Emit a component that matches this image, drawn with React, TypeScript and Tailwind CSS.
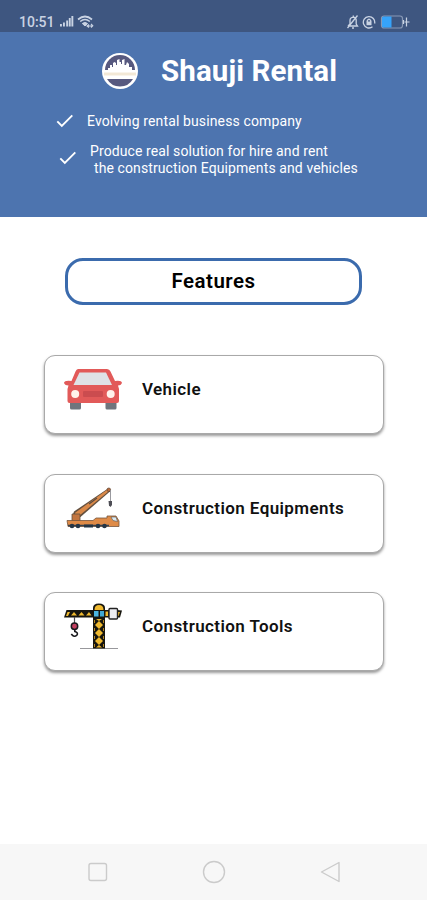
import type { ReactNode } from "react";

interface Feature {
  title: string;
  icon: ReactNode;
}

function CheckIcon() {
  return (
    <svg width="18" height="14" viewBox="0 0 18 14" fill="none" stroke="#fff" strokeWidth="1.9">
      <path d="M1.3 7.3 L5.8 11.8 L16.3 1.3" />
    </svg>
  );
}

function CarIcon() {
  return (
    <svg width="60" height="50" viewBox="0 0 60 50">
      <rect x="7" y="34" width="11" height="10.5" rx="1.5" fill="#6f757d" />
      <rect x="42.5" y="34" width="11" height="10.5" rx="1.5" fill="#6f757d" />
      <path
        d="M15 4 H44 Q46.5 4 47.5 6.5 L52 16 Q58.5 15 59 18 Q58 20.500 55 20.500 L56 24 V36 Q56 38 54 38 H6.500 Q4.500 38 4.500 36 V24 L5.500 20.500 Q2 20.500 1 18 Q1.500 15 8.500 16 L12.500 6.500 Q13.500 4 15 4 Z"
        fill="#e25a59"
      />
      <path d="M16.5 7.5 H43 L49 20 H10.5 Z" fill="#dfe2e6" />
      <rect x="20" y="26" width="20" height="6" rx="1" fill="#cb4c4f" />
      <circle cx="12.2" cy="29" r="4" fill="#fff3ec" />
      <circle cx="47.7" cy="29" r="4" fill="#fff3ec" />
    </svg>
  );
}

function TruckCraneIcon() {
  return (
    <svg width="60" height="50" viewBox="0 0 60 50">
      {/* boom */}
      <path d="M9 33 L11 27.5 L45 4.500 L47.500 7 L17.500 33 Z" fill="#63503f" />
      <path d="M11 32 L12.5 28.5 L44.500 5.500 L46 7 L16.500 31.500 Z" fill="#d98848" />
      <path d="M26 20 L34 14" stroke="#5a4a40" strokeWidth="1.2" />
      <circle cx="45.8" cy="5.8" r="1.8" fill="#b96a3a" stroke="#5b4334" strokeWidth=".7" />
      <path d="M47.5 6 V17" stroke="#8e8e94" strokeWidth=".9" />
      <path d="M45.5 17 H49 V21 L47.5 23 L46 21.5 Z" fill="#4d4d55" />
      {/* chassis and cab */}
      <path d="M9 30 H17 V37 H9 Z" fill="#c27540" stroke="#63503f" strokeWidth=".8" />
      <path d="M4 36.500 H30 L33 34 H44 V32 H53 L56 37 V42.500 H5 Z" fill="#df8b47" stroke="#76563e" strokeWidth=".8" />
      <path d="M48 33 H53 L54.5 37.5 L50 36.500 Z" fill="#dbe9f1" stroke="#555" strokeWidth=".6" />
      <path d="M5 41.500 H46" stroke="#38424d" strokeWidth="1.500" />
      <g fill="#253646">
        <circle cx="9" cy="42" r="2.300" />
        <circle cx="15" cy="42" r="2.300" />
        <rect x="21" y="40.500" width="9" height="3" />
        <circle cx="35" cy="42" r="2.300" />
        <circle cx="41.500" cy="42" r="2.300" />
      </g>
    </svg>
  );
}

function TowerCraneIcon() {
  return (
    <svg width="60" height="50" viewBox="0 0 60 50">
      {/* mast */}
      <path d="M17 46.500 H55" stroke="#98989c" strokeWidth="1" />
      <path d="M30 46.500 V6 Q30 1.500 35.800 1.500 Q42 1.500 42 6 V46.500 Z" fill="#17160f" />
      <path d="M31.500 8 Q31.500 3 36 3 Q40.500 3 40.500 8 Z" fill="#efb92f" />
      <g fill="#efb92f">
        <path d="M36 19 L40 23 L36 27 L32 23 Z" />
        <path d="M36 27 L40 31 L36 35 L32 31 Z" />
        <path d="M36 35 L40 39 L36 43 L32 39 Z" />
        <path d="M33 17 H39 L36 19 Z M33 45.500 H39 L36 43 Z" />
      </g>
      <path d="M31.500 18 V45 M40.500 18 V45" stroke="#c99324" strokeWidth=".9" strokeDasharray="3 5" />
      {/* jib */}
      <path d="M3.500 8 H54 L59 8.500 L57 15.500 H1 Z" fill="#17160f" />
      <path d="M4.500 10 H7 L5 14 H3 Z M8 13.500 L11 10 L14 13.500 Z M15.500 13.500 L18.500 10 L21.500 13.500 Z M23 13.500 L26 10 L28.500 13.500 Z M54 10 H57 L55.500 14 H54 Z" fill="#efb92f" />
      <rect x="31" y="9" width="4.500" height="5.500" fill="#4bb5df" />
      <rect x="37" y="9" width="4" height="5.500" fill="#3fa8d5" />
      <path d="M42.500 9.500 H45 V14 H42.500 Z" fill="#efb92f" />
      <rect x="46" y="6.500" width="8.500" height="10.500" rx="1" fill="#ececf0" stroke="#222" strokeWidth="1.400" />
      {/* hook */}
      <path d="M11.500 15 V22" stroke="#4c4c52" strokeWidth="1.200" />
      <circle cx="11.500" cy="24.300" r="3.200" fill="#c33f60" stroke="#19191d" strokeWidth="1.500" />
      <path d="M11.800 27.500 V29.500 Q15.500 30.500 14 33 Q11 36 8.300 32" fill="none" stroke="#19191d" strokeWidth="1.600" />
    </svg>
  );
}

function Logo() {
  return (
    <svg width="38" height="38" viewBox="0 0 38 38">
      <circle cx="19" cy="19" r="18" fill="#fff" />
      <path d="M4 18 A15 15 0 0 1 34 18 Z" fill="#57597f" />
      <path
        d="M7 18.500 V16 H9 V13 H11 V15 H12 V11 L13.500 10 L15 11 V13 H16 V8 L18.500 7 V10 H20 V12 H21 V8 L23.500 7 V13 H25 L26 10 L28 12 V15 H31 V18.500 Z"
        fill="#fff"
      />
      <path d="M6 27 H32 A15 15 0 0 1 6 27 Z" fill="#57597f" />
      <path d="M3 22 H35" stroke="#f2e8d6" strokeWidth="3" />
    </svg>
  );
}

function StatusBar() {
  return (
    <div className="flex h-8 items-end justify-between bg-[#3e5680] pr-[16px] pb-[2px] pl-[19px] text-[#c9d3e3]">
      <div className="flex items-center">
        <span className="w-[36px] pt-px text-[14px] leading-[16px] font-medium whitespace-nowrap">10:51</span>
        <svg className="ml-[4px]" width="15" height="13" viewBox="0 0 15 13" fill="currentColor">
          <rect x="1" y="9" width="1.9" height="2.5" />
          <rect x="4" y="7.5" width="1.9" height="4" />
          <rect x="7.2" y="5.5" width="1.9" height="6" />
          <rect x="9.8" y="3" width="1.9" height="8.5" />
          <rect x="12.4" y="1" width="1.9" height="10.5" />
        </svg>
        <svg className="ml-[3px]" width="17" height="14" viewBox="0 0 17 14" fill="none" stroke="currentColor">
          <path d="M1 4.5 Q8 -1.5 15 4.5" strokeWidth="1.7" />
          <path d="M3.2 6.5 Q8 2.5 12.8 6.5" strokeWidth="1.5" />
          <path d="M5.3 8.5 Q8 6.3 10.5 8.5 L8 11 Z" fill="currentColor" />
          <path d="M10 11 L15.5 11 M12 9.5 L10 11 L12 12.5 M14 9 L15.8 10.8 L14 12.5" strokeWidth="1.1" />
        </svg>
      </div>
      <div className="flex items-center">
        <svg width="13" height="16" viewBox="0 0 13 16" fill="none" stroke="currentColor" strokeWidth="1.3">
          <path d="M1 12 H10.5 L9.2 10 V6 Q9 3.5 6.3 3.2 Q3 3.5 3 6.5 V10 L1 12 M5 14 H7 M.5 14 L10.5 1.5 M6.3 1.5 V3" />
        </svg>
        <svg className="ml-[2px]" width="14" height="16" viewBox="0 0 14 16" fill="none" stroke="currentColor" strokeWidth="1.3">
          <path d="M10.5 12.8 A5.7 5.7 0 1 1 12.6 9.5" />
          <rect x="4.5" y="7.5" width="5" height="3.7" fill="currentColor" stroke="none" />
          <path d="M5.3 8 V6.5 Q7 4 8.7 6.5 V8" />
        </svg>
        <svg className="ml-[4px]" width="31" height="16" viewBox="0 0 31 16" fill="none">
          <rect x="1.5" y="2" width="21" height="12" rx="2.5" stroke="#8798b5" strokeWidth="1.2" />
          <path d="M3.5 2.5 H11.5 V13.5 H3.5 Q2 13.5 2 12 V4 Q2 2.5 3.5 2.5 Z" fill="#36a3fa" />
          <path d="M23.5 6 V10 M24.5 8 H29.5 M26.500 3.500 V12.500" stroke="currentColor" strokeWidth="1.2" />
        </svg>
      </div>
    </div>
  );
}

const features: Feature[] = [
  { title: "Vehicle", icon: <CarIcon /> },
  { title: "Construction Equipments", icon: <TruckCraneIcon /> },
  { title: "Construction Tools", icon: <TowerCraneIcon /> },
];

function FeatureCard({ title, icon }: Feature) {
  return (
    <div className="flex h-[79px] items-start rounded-[11px] border border-[#a9a9a9] bg-white pt-[9px] pl-[18px] shadow-[0_2px_3px_rgba(0,0,0,0.4)]">
      {icon}
      <span className="ml-[19px] pt-[13px] text-[17px] leading-[22px] font-semibold tracking-[0.4px] whitespace-nowrap text-[#111]">
        {title}
      </span>
    </div>
  );
}

function NavBar() {
  return (
    <div className="flex h-14 items-center justify-between bg-[#f7f7f7] pr-[85px] pl-[86px]">
      <svg width="24" height="24" viewBox="0 0 24 24" fill="none" stroke="#cbcbcb" strokeWidth="1.4">
        <rect x="3" y="3.5" width="17.5" height="17" rx="2" />
      </svg>
      <svg width="24" height="24" viewBox="0 0 24 24" fill="none" stroke="#cbcbcb" strokeWidth="1.4">
        <circle cx="12" cy="12" r="10.5" />
      </svg>
      <svg width="24" height="24" viewBox="0 0 24 24" fill="none" stroke="#cbcbcb" strokeWidth="1.4" strokeLinejoin="round">
        <path d="M21 2.5 V21.5 L3.5 12 Z" />
      </svg>
    </div>
  );
}

export default function App() {
  return (
    <div className="flex h-[900px] w-[427px] flex-col overflow-hidden bg-white font-[Roboto,sans-serif]">
      <StatusBar />

      <header className="h-[184.5px] bg-[#4d74af] text-white">
        <div className="flex items-center pt-5 pl-[101px]">
          <Logo />
          <h1 className="ml-[22px] text-[29.5px] leading-[38px] font-bold tracking-[0.1px] whitespace-nowrap">Shauji Rental</h1>
        </div>
        <div className="mt-[22px] flex items-center pl-[56px] text-[14px] leading-[17px] tracking-[0.13px]">
          <CheckIcon />
          <p className="ml-[13px] pt-px whitespace-nowrap">Evolving rental business company</p>
        </div>
        <div className="mt-[13px] flex items-center pl-[59px] text-[14px] leading-[17px] tracking-[0.1px]">
          <div className="pb-[4px]">
            <CheckIcon />
          </div>
          <div className="ml-[13px] whitespace-nowrap">
            <p>Produce real solution for hire and rent</p>
            <p className="pl-[4px]">the construction Equipments and vehicles</p>
          </div>
        </div>
      </header>

      <main className="flex flex-1 flex-col pt-[41.5px]">
        <h2 className="mx-auto flex h-[47px] w-[297px] items-center justify-center rounded-[18px] border-3 border-[#3b6bad] text-[20.5px] font-semibold tracking-[0.45px] text-black">
          Features
        </h2>
        <div className="mt-[50px] flex flex-col gap-[39.5px] pr-[43px] pl-[44px]">
          {features.map((feature) => (
            <FeatureCard key={feature.title} {...feature} />
          ))}
        </div>
      </main>

      <NavBar />
    </div>
  );
}
